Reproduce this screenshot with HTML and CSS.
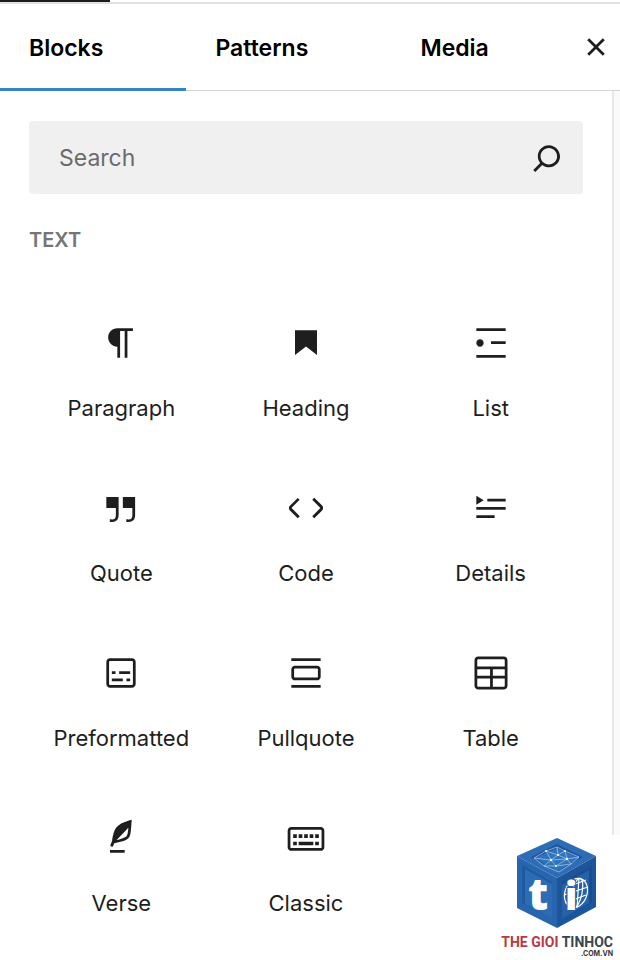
FILE: index.html
```html
<!DOCTYPE html>
<html lang="en">
<head>
  <meta charset="UTF-8" />
  <meta name="viewport" content="width=device-width, initial-scale=1" />
  <title>Block Inserter</title>
  <link rel="stylesheet" href="styles.css">
</head>
<body>
  <div class="inserter">
    <div class="topbar"><div class="topbar-active"></div></div>

    <div class="header">
      <div class="tabs" role="tablist">
        <button class="tab active" role="tab" aria-selected="true">Blocks</button>
        <button class="tab" role="tab" aria-selected="false">Patterns</button>
        <button class="tab" role="tab" aria-selected="false">Media</button>
      </div>
      <button class="close-btn" aria-label="Close">
        <svg class="icon" viewBox="0 0 24 24"><path d="M12 13.06l3.712 3.713 1.061-1.06L13.061 12l3.712-3.712-1.06-1.06L12 10.938 8.288 7.227l-1.061 1.06L10.939 12l-3.712 3.712 1.06 1.061L12 13.061z"/></svg>
      </button>
    </div>

    <main class="content">
      <form class="search" role="search">
        <input type="text" id="search" aria-label="Search" placeholder="Search" />
        <button type="submit" class="search-btn" aria-label="Submit search">
          <svg class="icon" viewBox="0 0 24 24"><path d="M13 5c-3.3 0-6 2.7-6 6 0 1.4.5 2.7 1.3 3.7l-3.8 3.8 1.1 1.1 3.8-3.8c1 .8 2.3 1.3 3.7 1.3 3.3 0 6-2.7 6-6S16.3 5 13 5zm0 10.5c-2.5 0-4.5-2-4.5-4.5s2-4.5 4.5-4.5 4.5 2 4.5 4.5-2 4.5-4.5 4.5z"/></svg>
        </button>
      </form>

      <h2>TEXT</h2>

      <div class="blocks">
        <button class="block">
          <svg class="icon" viewBox="0 0 24 24"><path d="m9.996 14v-.225l.004 0v6.225h1.5v-14.5h2.5v14.5h1.5v-14.5h3v-1.5h-8.504c-2.761 0-5 2.239-5 5 0 2.761 2.239 5 5 5z"/></svg>
          <span>Paragraph</span>
        </button>
        <button class="block">
          <svg class="icon" viewBox="0 0 24 24"><path d="M6 5v13.591l6-4.744 6 4.744V5H6z"/></svg>
          <span>Heading</span>
        </button>
        <button class="block">
          <svg class="icon" viewBox="0 0 24 24"><path d="M4 4v1.5h16V4H4zm8 8.5h8V11h-8v1.5zM4 20h16v-1.5H4V20zm4-8c0-1.1-.9-2-2-2s-2 .9-2 2 .9 2 2 2 2-.9 2-2z"/></svg>
          <span>List</span>
        </button>
        <button class="block">
          <svg class="icon" viewBox="0 0 24 24"><path d="M13 6v6h5.2v4c0 .8-.2 1.4-.5 1.7-.6.6-1.6.6-2.5.5h-.3v1.5h.5c1 0 2.3-.1 3.3-1 .6-.6 1-1.6 1-2.8V6H13zm-9 6h5.2v4c0 .8-.2 1.4-.5 1.7-.6.6-1.6.6-2.5.5h-.3v1.5h.5c1 0 2.3-.1 3.3-1 .6-.6 1-1.6 1-2.8V6H4v6z"/></svg>
          <span>Quote</span>
        </button>
        <button class="block">
          <svg class="icon" viewBox="0 0 24 24"><path d="M20.8 10.7l-4.3-4.3-1.1 1.1 4.3 4.3c.1.1.1.3 0 .4l-4.3 4.3 1.1 1.1 4.3-4.3c.7-.8.7-1.9 0-2.6zM4.2 11.8l4.3-4.3-1-1-4.3 4.3c-.7.7-.7 1.8 0 2.5l4.3 4.3 1.1-1.1-4.3-4.3c-.2-.1-.2-.3-.1-.4z"/></svg>
          <span>Code</span>
        </button>
        <button class="block">
          <svg class="icon" viewBox="0 0 24 24"><path d="M4 16h10v1.5H4V16zm0-4.5h16V13H4v-1.5zM10 7h10v1.5H10V7z"/><path d="m4 5.25 4 2.5-4 2.5v-5z"/></svg>
          <span>Details</span>
        </button>
        <button class="block">
          <svg class="icon" viewBox="0 0 24 24"><path d="M18 4H6c-1.1 0-2 .9-2 2v12c0 1.1.9 2 2 2h12c1.1 0 2-.9 2-2V6c0-1.1-.9-2-2-2zm.5 14c0 .3-.2.5-.5.5H6c-.3 0-.5-.2-.5-.5V6c0-.3.2-.5.5-.5h12c.3 0 .5.2.5.5v12z"/><path d="M7 16.5h6V15H7v1.5zm4-4h6V11h-6v1.5zM9 11H7v1.5h2V11zm6 5.5h2V15h-2v1.5z"/></svg>
          <span>Preformatted</span>
        </button>
        <button class="block">
          <svg class="icon" viewBox="0 0 24 24"><path d="M18 8H6c-1.1 0-2 .9-2 2v4c0 1.1.9 2 2 2h12c1.1 0 2-.9 2-2v-4c0-1.1-.9-2-2-2zm.5 6c0 .3-.2.5-.5.5H6c-.3 0-.5-.2-.5-.5v-4c0-.3.2-.5.5-.5h12c.3 0 .5.2.5.5v4zM4 4v1.5h16V4H4zm0 16h16v-1.5H4V20z"/></svg>
          <span>Pullquote</span>
        </button>
        <button class="block">
          <svg class="icon" viewBox="0 0 24 24"><path d="M19 3H5c-1.1 0-2 .9-2 2v14c0 1.1.9 2 2 2h14c1.1 0 2-.9 2-2V5c0-1.1-.9-2-2-2zM5 4.5h14c.3 0 .5.2.5.5v3.5h-15V5c0-.3.2-.5.5-.5zm8 5.5h6.5v3.5H13V10zm-1.5 3.5h-7V10h7v3.5zm-7 5.5v-4h7v4.5H5c-.3 0-.5-.2-.5-.5zm14.5.5h-6V15h6.5v4c0 .3-.2.5-.5.5z"/></svg>
          <span>Table</span>
        </button>
        <button class="block">
          <svg class="icon" viewBox="0 0 24 24"><path d="M17.8 2l-.9.3c-.1 0-3.6 1-5.2 2.1C10 5.5 9.3 6.5 8.9 7.1c-.6.9-1.7 4.7-1.7 6.3l-.9 2.3c-.2.4 0 .8.4 1 .1 0 .2.1.3.1.3 0 .6-.2.7-.5l.6-1.5c.3 0 .7-.1 1.2-.2.7-.1 1.4-.3 2.2-.5.8-.2 1.6-.5 2.4-.8.7-.3 1.4-.7 1.9-1.2s.8-1.2 1-1.9c.2-.7.3-1.6.4-2.4.1-.8.1-1.7.2-2.5 0-.8.1-1.5.2-2.1V2zm-1.9 5.6c-.1.8-.2 1.5-.3 2.1-.2.6-.4 1-.6 1.3-.3.3-.8.6-1.4.9-.7.3-1.4.5-2.2.8-.6.2-1.3.3-1.8.4L15 7.5c.3-.3.6-.7 1-1.1 0 .4 0 .8-.1 1.2zM6 20h8v-1.5H6V20z"/></svg>
          <span>Verse</span>
        </button>
        <button class="block">
          <svg class="icon" viewBox="0 0 24 24"><path d="M20 6H4c-1.1 0-2 .9-2 2v9c0 1.1.9 2 2 2h16c1.1 0 2-.9 2-2V8c0-1.1-.9-2-2-2zm.5 11c0 .3-.2.5-.5.5H4c-.3 0-.5-.2-.5-.5V8c0-.3.2-.5.5-.5h16c.3 0 .5.2.5.5v9zM10 10H8v2h2v-2zm-5 2h2v-2H5v2zm8-2h-2v2h2v-2zm-5 6h8v-2H8v2zm6-4h2v-2h-2v2zm3 0h2v-2h-2v2zm0 4h2v-2h-2v2zM5 16h2v-2H5v2z"/></svg>
          <span>Classic</span>
        </button>
      </div>
    </main>

    <!-- Watermark -->
    <div class="watermark">
      <svg class="cube" viewBox="0 0 80 92">
        <path fill="#2d6db5" d="M40 1 79 19 40 41 0 19z"/>
        <path fill="#2766ae" d="M0 19 40 41V91L0 71z"/>
        <path fill="#1d559b" d="M79 19 40 41V91L79 70z"/>
        <path fill="#1f559c" d="M40 7 66 20 40 34 14 20z"/>
        <path fill="#2f73bd" d="M40 11 62 21 40 34 18 21z"/>
        <path fill="#2059a0" d="M5 28 35 45V81L5 66z"/>
        <path fill="#2b6cb5" d="M8 32 35 47V81L8 67z"/>
        <path fill="#1a4d8c" d="M75 29 45 45V82L75 65z"/>
        <path fill="#2462aa" d="M72 33 45 48V82L72 66z"/>
        <g fill="none" stroke="#c3dbf3" stroke-width=".6">
          <path d="M17 21 29 14 40 10 48 14 62 20 54 27 42 35 27 29 17 21 34 23 29 14 41 18 40 10M34 23 41 18 48 14 50 22 62 20M34 23 27 29 39 29 34 23 50 22 39 29 54 27 50 22 41 18"/>
        </g>
        <g fill="#fff">
          <circle cx="29" cy="14" r="1"/><circle cx="41" cy="18" r="1"/><circle cx="34" cy="23" r="1.2"/>
          <circle cx="50" cy="22" r="1.2"/><circle cx="39" cy="29" r="1"/><circle cx="48" cy="14" r="1"/>
        </g>
        <g fill="none" stroke="#fff" stroke-width="1.2">
          <ellipse cx="59" cy="56" rx="11" ry="15" transform="rotate(20 59 56)"/>
          <ellipse cx="60" cy="56" rx="5" ry="15" transform="rotate(12 60 56)"/>
          <path d="M62 41 60 71M47 58 71 50M48 66 69 58M53 49 69 43"/>
        </g>
        <text class="letter-t" x="11" y="73">t</text>
        <text class="letter-i" x="48" y="73">i</text>
      </svg>
      <div class="brand"><span class="red">THE GIOI</span> TINHOC</div>
      <div class="domain">.COM.VN</div>
    </div>
  </div>

  <script>
    const tabs = document.querySelectorAll('.tab');

    tabs.forEach(tab => {
      tab.addEventListener('click', () => {
        tabs.forEach(t => {
          t.classList.toggle('active', t === tab);
          t.setAttribute('aria-selected', t === tab);
        });
      });
    });

    document.querySelector('.search').addEventListener('submit', e => {
      e.preventDefault();
    });
  </script>
</body>
</html>
```
FILE: styles.css
```css
* {
  box-sizing: border-box;
}
body {
  margin: 0;
  background: #fff;
  color: #1e1e1e;
  font-family: Inter, "Liberation Sans", sans-serif;
  font-size: 22px;
}
button {
  padding: 0;
  border: none;
  background: none;
  color: inherit;
  font: inherit;
  cursor: pointer;
}
.inserter {
  position: relative;
  display: flex;
  flex-direction: column;
  min-height: 100vh;
}
.topbar {
  height: 4px;
  border-bottom: 2px solid #e0e0e0;
}
.topbar-active {
  width: 110px;
  height: 2px;
  background: #1e1e1e;
}
.header {
  display: flex;
  align-items: stretch;
  height: 87px;
  border-bottom: 1px solid #d4d4d4;
}
.tabs {
  display: flex;
  flex: 1;
}
.tab {
  flex: 1 1 auto;
  margin-bottom: -1px;
  padding: 4px 28px 0 29px;
  border-bottom: 3px solid transparent;
  color: #000;
  font-size: 23px;
  font-weight: 600;
  text-align: left;
}
.tab.active {
  border-bottom-color: #3582c4;
}
.close-btn {
  width: 48px;
}
.icon {
  display: block;
  width: 44px;
  height: 44px;
  margin: 0 auto;
  fill: #1e1e1e;
}
.content {
  flex: 1;
  margin-right: 6px;
  padding: 30px 29px 0;
  border-right: 2px solid #e8e8e8;
  box-shadow: 6px 0 #fafafa;
}
.search {
  display: flex;
  align-items: center;
  height: 73px;
  padding: 0 14px 0 30px;
  border-radius: 4px;
  background: #f0f0f0;
}
.search input {
  flex: 1;
  min-width: 0;
  padding: 0;
  border: none;
  outline: none;
  background: none;
  color: #1e1e1e;
  font: inherit;
  font-size: 23px;
}
.search input::placeholder {
  color: #6b6b6b;
  opacity: 1;
}
h2 {
  margin: 32px 0 36px;
  color: #757575;
  font-size: 20px;
  font-weight: 600;
  line-height: 28px;
}
.blocks {
  display: grid;
  grid-template-columns: repeat(3, 1fr);
}
.block {
  padding: 31px 0 33px;
}
.block span {
  display: block;
  margin-top: 29px;
  line-height: 28px;
}
.watermark {
  position: absolute;
  right: 0;
  bottom: 0;
  width: 120px;
  height: 125px;
  padding: 2px 7px 0 0;
  background: #fff;
}
.cube {
  display: block;
  width: 80px;
  height: 92px;
  margin: 0 auto;
}
.letter-t, .letter-i {
  fill: #fff;
  font-family: "Open Sans", sans-serif;
  font-weight: 800;
}
.letter-t {
  font-size: 44px;
}
.letter-i {
  stroke: #2462aa;
  stroke-width: 2px;
  paint-order: stroke;
  font-size: 38px;
}
.brand {
  color: #37474f;
  font-family: Roboto, "Liberation Sans", sans-serif;
  font-size: 14px;
  font-weight: bold;
  line-height: 26px;
  text-align: right;
  white-space: nowrap;
}
.red {
  color: #b93a40;
}
.domain {
  margin-top: -5px;
  color: #333;
  font-size: 7px;
  font-weight: 700;
  line-height: 8px;
  text-align: right;
}
```
